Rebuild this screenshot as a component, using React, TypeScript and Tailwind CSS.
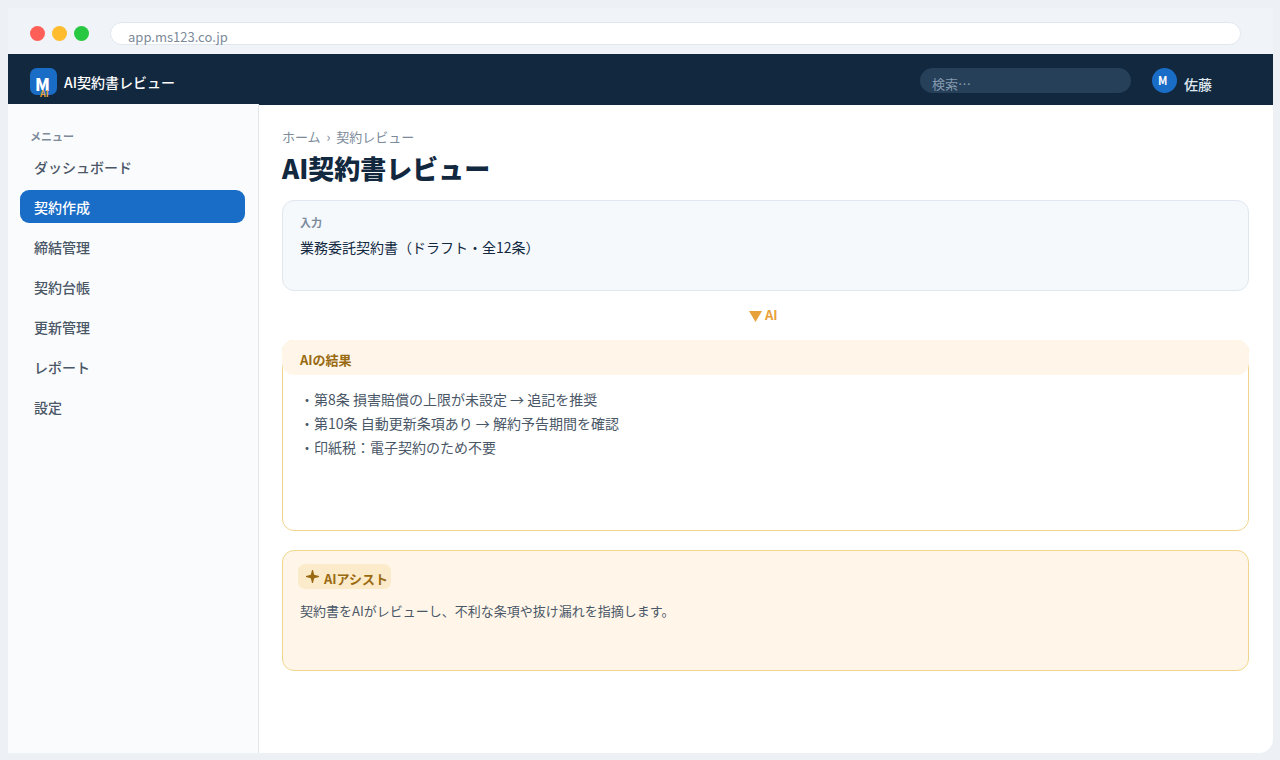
const navItems = ["ダッシュボード", "契約作成", "締結管理", "契約台帳", "更新管理", "レポート", "設定"];
const activeItem = "契約作成";

const results = [
  "・第8条 損害賠償の上限が未設定 → 追記を推奨",
  "・第10条 自動更新条項あり → 解約予告期間を確認",
  "・印紙税：電子契約のため不要",
];

function BrowserBar() {
  return (
    <div className="flex h-[46px] shrink-0 items-start bg-[#f0f3f8] pl-[22px]">
      <div className="mt-[18px] flex gap-[7px]">
        <span className="size-[15px] rounded-full bg-[#ff5f57]" />
        <span className="size-[15px] rounded-full bg-[#febc2e]" />
        <span className="size-[15px] rounded-full bg-[#28c840]" />
      </div>
      <div className="mt-[14px] ml-[21px] h-[23px] w-[1131px] rounded-full border border-[#e0e7ef] bg-white pl-[17px] text-[13px] leading-[27px] text-[#7c8a9a]">
        app.ms123.co.jp
      </div>
    </div>
  );
}

function Header() {
  return (
    <header className="flex h-[51px] shrink-0 items-start bg-[#12283f] pl-[22px]">
      <div className="relative mt-[14px] h-[27px] w-[27px] rounded-[7px] bg-[#1a6dc7]">
        <span className="absolute top-[5px] left-[5px] text-[17px] leading-[22px] font-black text-white">M</span>
        <span className="absolute top-[20px] left-[10px] text-[9px] leading-[12px] font-bold text-[#e8a13a]">AI</span>
      </div>
      <div className="mt-[18px] ml-[7px] w-[856px] text-[14px] leading-[20px] font-medium text-white">
        AI契約書レビュー
      </div>
      <div className="mt-[14px] h-[25px] w-[211px] rounded-full bg-[#27405a] pl-3 text-[13px] leading-[31px] text-[#8499ae]">
        検索…
      </div>
      <div className="mt-[14px] ml-[21px] size-[25px] rounded-full bg-[#1a6dc7] pl-[6px] text-[11px] leading-[25px] font-bold text-white">
        M
      </div>
      <div className="mt-5 ml-[7px] text-[14px] leading-[20px] font-medium text-[#dfe7f0]">佐藤</div>
    </header>
  );
}

function Sidebar() {
  return (
    <aside className="-mt-px w-[251px] shrink-0 border-r border-[#e0e7ef] bg-[#fafbfd] pt-[24px] pl-3">
      <div className="pl-[10px] text-[11px] leading-[16px] font-bold text-[#7c8a9a]">メニュー</div>
      <nav className="mt-[6px] flex flex-col gap-[7px]">
        {navItems.map((item) => (
          <a
            key={item}
            className={
              item === activeItem
                ? "h-[33px] w-[225px] rounded-[9px] bg-[#1a6dc7] pl-[14px] text-[14px] leading-[35px] font-medium text-white"
                : "h-[33px] w-[225px] pl-[14px] text-[14px] leading-[35px] font-medium text-[#4a5767]"
            }
          >
            {item}
          </a>
        ))}
      </nav>
    </aside>
  );
}

function Main() {
  return (
    <main className="flex w-[991px] flex-col pt-[22px] pl-[23px]">
      <div className="text-[13px] leading-5 whitespace-pre text-[#7c8a9a]">ホーム  ›  契約レビュー</div>
      <h1 className="mt-[2px] text-[26px] leading-[38px] font-black text-[#12283f]">AI契約書レビュー</h1>

      <section className="mt-[13px] h-[91px] w-[967px] rounded-[12px] border border-[#e0e7ef] bg-[#f5f9fc] pt-[13px] pl-[17px]">
        <div className="text-[11px] leading-[16px] font-bold text-[#7c8a9a]">入力</div>
        <div className="mt-[7px] text-[14px] leading-[20px] text-[#12283f]">業務委託契約書（ドラフト・全12条）</div>
      </section>

      <div className="flex h-[49px] w-[967px] items-start pt-[14px] pl-[467px] text-[#e8a13a]">
        <svg className="mt-[6px]" width="13" height="11" viewBox="0 0 13 11" fill="currentColor">
          <path d="M0 0h13L6.5 11z" />
        </svg>
        <span className="ml-[3px] text-[13px] leading-[20px] font-bold">AI</span>
      </div>

      <section className="h-[191px] w-[967px] rounded-[12px] border border-[#f0d68c] bg-white">
        <div className="-mx-px -mt-px h-[35px] rounded-[12px] bg-[#fff6e9] pl-[18px] text-[13px] leading-[39px] font-bold text-[#9a6a12]">
          AIの結果
        </div>
        <ul className="pt-[12px] pl-[17px] text-[14px] leading-[24px] text-[#4a5767]">
          {results.map((line) => (
            <li key={line}>{line}</li>
          ))}
        </ul>
      </section>

      <section className="mt-[19px] h-[121px] w-[967px] rounded-[12px] border border-[#f0d68c] bg-[#fff6e9] pt-[13px] pl-[15px]">
        <div className="flex h-[25px] w-[93px] items-start rounded-[7px] bg-[#fcebca] pl-2 text-[#9a6a12]">
          <svg className="mt-[6px] shrink-0" width="13" height="13" viewBox="0 0 13 13" fill="currentColor">
            <path d="M6 0h1L8.2 4.8L13 6v1L8.2 8.2L7 13H6L4.8 8.2L0 7V6L4.8 4.8z" />
          </svg>
          <span className="ml-[5px] text-[13px] leading-[29px] font-bold whitespace-nowrap">AIアシスト</span>
        </div>
        <p className="mt-[12px] pl-[2px] text-[13px] leading-[20px] text-[#4a5767]">
          契約書をAIがレビューし、不利な条項や抜け漏れを指摘します。
        </p>
      </section>
    </main>
  );
}

export default function App() {
  return (
    <div className="h-[760px] w-[1280px] overflow-hidden bg-[#edf1f6] pt-2 pl-2 font-['Noto_Sans_CJK_JP',sans-serif]">
      <div className="flex h-[745px] w-[1265px] flex-col overflow-hidden rounded-br-[14px] bg-white">
        <BrowserBar />
        <Header />
        <div className="flex flex-1">
          <Sidebar />
          <Main />
        </div>
      </div>
    </div>
  );
}
